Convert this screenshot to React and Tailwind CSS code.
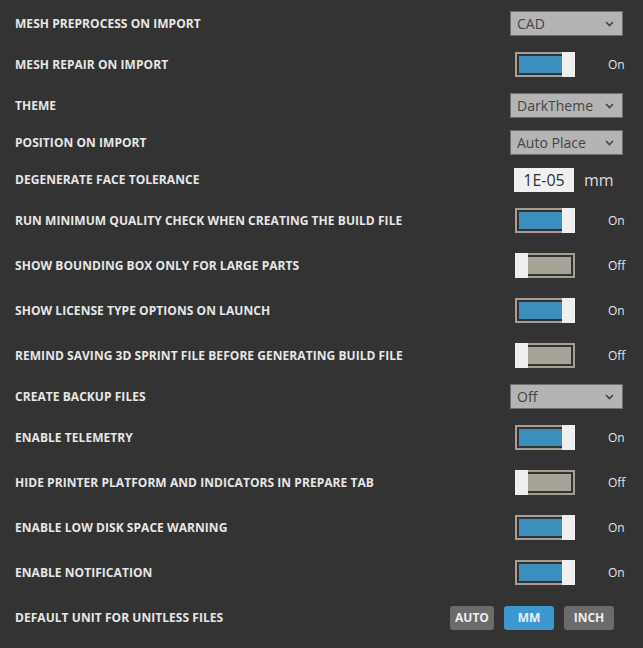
import { useState } from "react";

const font = { fontFamily: '"Open Sans", "Liberation Sans", sans-serif' };

function Select({ value }) {
  return (
    <div className="flex items-center justify-between w-[113px] h-[25px] bg-[#b4b4b4] border border-[#6e6e6e] pl-[6px] pr-[8px]">
      <span className="text-[14px] text-[#444444] leading-none">{value}</span>
      <svg width="9" height="6" viewBox="0 0 9 6">
        <polyline points="1,1 4.5,4.5 8,1" fill="none" stroke="#444" strokeWidth="1.6" />
      </svg>
    </div>
  );
}

function Toggle({ on, onClick }) {
  return (
    <div className="flex items-center ml-[5px]">
      <button onClick={onClick} className="relative w-[60px] h-[25px] bg-[#a49e93] p-[2px]">
        <div className={"w-full h-full border-2 border-[#333333] " + (on ? "bg-[#3b8fbd]" : "bg-[#a8a397]")}></div>
        {on ? (
          <div className="absolute top-0 right-0 w-[13px] h-full bg-[#efefef]"></div>
        ) : (
          <div className="absolute top-0 left-0 w-[13px] h-full bg-[#efefef]"></div>
        )}
      </button>
      <span className="ml-[33px] text-[12px] text-[#e4e4e4]">{on ? "On" : "Off"}</span>
    </div>
  );
}

function Row({ label, tall, children }) {
  return (
    <div className={"flex items-center justify-between pl-[15px] pr-[20px] " + (tall ? "h-[45px]" : "h-[37px]")}>
      <span className="text-[12px] font-bold text-[#e6e6e6] tracking-[0.05px]">{label}</span>
      <div className="w-[113px] flex items-center">{children}</div>
    </div>
  );
}

export default function App() {
  const [toggles, setToggles] = useState({
    repair: true,
    quality: true,
    bbox: false,
    license: true,
    remind: false,
    telemetry: true,
    hide: false,
    disk: true,
    notif: true,
  });
  const [unit, setUnit] = useState("MM");
  const flip = (k) => setToggles({ ...toggles, [k]: !toggles[k] });

  return (
    <div className="w-[643px] h-[648px] bg-[#333333] pt-[5px] overflow-hidden" style={font}>
      <Row label="MESH PREPROCESS ON IMPORT">
        <Select value="CAD" />
      </Row>
      <Row label="MESH REPAIR ON IMPORT" tall>
        <Toggle on={toggles.repair} onClick={() => flip("repair")} />
      </Row>
      <Row label="THEME">
        <Select value="DarkTheme" />
      </Row>
      <Row label="POSITION ON IMPORT">
        <Select value="Auto Place" />
      </Row>
      <Row label="DEGENERATE FACE TOLERANCE">
        <div className="ml-[4px] w-[60px] h-[24px] bg-[#f0f0f0] flex items-center justify-center text-[16px] text-[#333333]">
          1E-05
        </div>
        <span className="ml-[10px] text-[16px] text-[#dddddd]">mm</span>
      </Row>
      <Row label="RUN MINIMUM QUALITY CHECK WHEN CREATING THE BUILD FILE" tall>
        <Toggle on={toggles.quality} onClick={() => flip("quality")} />
      </Row>
      <Row label="SHOW BOUNDING BOX ONLY FOR LARGE PARTS" tall>
        <Toggle on={toggles.bbox} onClick={() => flip("bbox")} />
      </Row>
      <Row label="SHOW LICENSE TYPE OPTIONS ON LAUNCH" tall>
        <Toggle on={toggles.license} onClick={() => flip("license")} />
      </Row>
      <Row label="REMIND SAVING 3D SPRINT FILE BEFORE GENERATING BUILD FILE" tall>
        <Toggle on={toggles.remind} onClick={() => flip("remind")} />
      </Row>
      <Row label="CREATE BACKUP FILES">
        <Select value="Off" />
      </Row>
      <Row label="ENABLE TELEMETRY" tall>
        <Toggle on={toggles.telemetry} onClick={() => flip("telemetry")} />
      </Row>
      <Row label="HIDE PRINTER PLATFORM AND INDICATORS IN PREPARE TAB" tall>
        <Toggle on={toggles.hide} onClick={() => flip("hide")} />
      </Row>
      <Row label="ENABLE LOW DISK SPACE WARNING" tall>
        <Toggle on={toggles.disk} onClick={() => flip("disk")} />
      </Row>
      <Row label="ENABLE NOTIFICATION" tall>
        <Toggle on={toggles.notif} onClick={() => flip("notif")} />
      </Row>
      <div className="flex items-center justify-between h-[45px] pl-[15px] pr-[29px]">
        <span className="text-[12px] font-bold text-[#e6e6e6] tracking-[0.05px]">DEFAULT UNIT FOR UNITLESS FILES</span>
        <div className="flex gap-[10px]">
          {["AUTO", "MM", "INCH"].map((u) => (
            <button
              key={u}
              onClick={() => setUnit(u)}
              className={
                "h-[24px] rounded-[3px] text-[12px] font-bold text-[#eeeeee] " +
                (u === "AUTO" ? "w-[44px] " : "w-[50px] ") +
                (unit === u ? "bg-[#3d98cf]" : "bg-[#6b6b6b]")
              }
            >
              {u}
            </button>
          ))}
        </div>
      </div>
    </div>
  );
}
